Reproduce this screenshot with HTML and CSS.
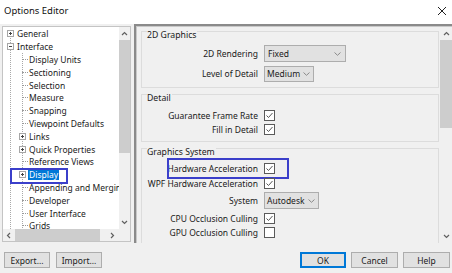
FILE: index.html
```html
<!DOCTYPE html>
<html>
<head>
<meta charset="utf-8">
<link rel="stylesheet" href="styles.css">
</head>
<body>
<div class="dialog">
  <div class="titlebar">
    <span class="title">Options Editor</span>
    <svg class="close" width="10" height="10" viewBox="0 0 10 10"><path d="M1 1L9 9M9 1L1 9" stroke="#222" stroke-width="1"/></svg>
  </div>
  <div class="main">
    <div class="treepanel">
      <div class="tree">
        <div class="row root"><svg class="box" width="7" height="7" viewBox="0 0 7 7"><rect x=".5" y=".5" width="6" height="6" fill="#fff" stroke="#a6a6a6"/><path d="M2 3.5h3M3.5 2v3" stroke="#444"/></svg><span class="label">General</span></div>
        <div class="row root"><svg class="box" width="7" height="7" viewBox="0 0 7 7"><rect x=".5" y=".5" width="6" height="6" fill="#fff" stroke="#a6a6a6"/><path d="M2 3.5h3" stroke="#444"/></svg><span class="label">Interface</span></div>
        <div class="kids">
          <div class="row leaf"><span class="stub"></span><span class="label">Display Units</span></div>
          <div class="row leaf"><span class="stub"></span><span class="label">Sectioning</span></div>
          <div class="row leaf"><span class="stub"></span><span class="label">Selection</span></div>
          <div class="row leaf"><span class="stub"></span><span class="label">Measure</span></div>
          <div class="row leaf"><span class="stub"></span><span class="label">Snapping</span></div>
          <div class="row leaf"><span class="stub"></span><span class="label">Viewpoint Defaults</span></div>
          <div class="row branch"><svg class="box" width="7" height="7" viewBox="0 0 7 7"><rect x=".5" y=".5" width="6" height="6" fill="#fff" stroke="#a6a6a6"/><path d="M2 3.5h3M3.5 2v3" stroke="#444"/></svg><span class="label">Links</span></div>
          <div class="row branch"><svg class="box" width="7" height="7" viewBox="0 0 7 7"><rect x=".5" y=".5" width="6" height="6" fill="#fff" stroke="#a6a6a6"/><path d="M2 3.5h3M3.5 2v3" stroke="#444"/></svg><span class="label">Quick Properties</span></div>
          <div class="row leaf"><span class="stub"></span><span class="label">Reference Views</span></div>
          <div class="row branch marked"><svg class="box" width="7" height="7" viewBox="0 0 7 7"><rect x=".5" y=".5" width="6" height="6" fill="#fff" stroke="#a6a6a6"/><path d="M2 3.5h3M3.5 2v3" stroke="#444"/></svg><span class="label selected">Display</span><span class="hl hl-tree"></span></div>
          <div class="row leaf"><span class="stub"></span><span class="label">Appending and Merging</span></div>
          <div class="row leaf"><span class="stub"></span><span class="label">Developer</span></div>
          <div class="row leaf"><span class="stub"></span><span class="label">User Interface</span></div>
          <div class="row leaf"><span class="stub"></span><span class="label">Grids</span></div>
        </div>
      </div>
      <div class="vscroll">
        <svg class="arrow" width="7" height="5" viewBox="0 0 7 5"><path d="M1 4L3.5 1.5L6 4" stroke="#606060" fill="none" stroke-width="1.2"/></svg>
        <div class="vthumb left-thumb"></div>
        <div class="vfill"></div>
        <svg class="arrow" width="7" height="5" viewBox="0 0 7 5"><path d="M1 1L3.5 3.5L6 1" stroke="#606060" fill="none" stroke-width="1.2"/></svg>
      </div>
      <div class="hscroll">
        <svg class="harrow" width="5" height="7" viewBox="0 0 5 7"><path d="M4 1L1.5 3.5L4 6" stroke="#606060" fill="none" stroke-width="1.2"/></svg>
        <div class="hthumb"></div>
        <div class="hfill"></div>
        <svg class="harrow" width="5" height="7" viewBox="0 0 5 7"><path d="M1 1L3.5 3.5L1 6" stroke="#606060" fill="none" stroke-width="1.2"/></svg>
      </div>
      <div class="corner"></div>
    </div>
    <div class="settings">
      <div class="groups">
        <div class="group g1">
          <div class="gtitle">2D Graphics</div>
          <div class="frow drow first">
            <span class="flabel">2D Rendering</span>
            <span class="combo w-fixed"><span>Fixed</span><svg width="7" height="4" viewBox="0 0 7 4"><path d="M.5 .5L3.5 3.3L6.5 .5" stroke="#8a8a8a" fill="none"/></svg></span>
          </div>
          <div class="frow drow gap3">
            <span class="flabel">Level of Detail</span>
            <span class="combo w-medium"><span>Medium</span><svg width="7" height="4" viewBox="0 0 7 4"><path d="M.5 .5L3.5 3.3L6.5 .5" stroke="#8a8a8a" fill="none"/></svg></span>
          </div>
        </div>
        <div class="group g2">
          <div class="gtitle">Detail</div>
          <div class="frow crow first">
            <span class="flabel">Guarantee Frame Rate</span>
            <svg class="check" width="11" height="11" viewBox="0 0 11 11"><rect x=".5" y=".5" width="10" height="10" fill="#fff" stroke="#5a5a5a"/><path d="M2.5 5.5L4.5 7.5L8.5 3" stroke="#555" fill="none" stroke-width="1"/></svg>
          </div>
          <div class="frow crow">
            <span class="flabel">Fill in Detail</span>
            <svg class="check" width="11" height="11" viewBox="0 0 11 11"><rect x=".5" y=".5" width="10" height="10" fill="#fff" stroke="#5a5a5a"/><path d="M2.5 5.5L4.5 7.5L8.5 3" stroke="#555" fill="none" stroke-width="1"/></svg>
          </div>
        </div>
        <div class="group g3">
          <div class="gtitle">Graphics System</div>
          <div class="frow crow g3first marked">
            <span class="flabel">Hardware Acceleration</span>
            <svg class="check" width="11" height="11" viewBox="0 0 11 11"><rect x=".5" y=".5" width="10" height="10" fill="#fff" stroke="#5a5a5a"/><path d="M2.5 5.5L4.5 7.5L8.5 3" stroke="#555" fill="none" stroke-width="1"/></svg>
            <span class="hl hl-hw"></span>
          </div>
          <div class="frow crow gap1">
            <span class="flabel">WPF Hardware Acceleration</span>
            <svg class="check" width="11" height="11" viewBox="0 0 11 11"><rect x=".5" y=".5" width="10" height="10" fill="#fff" stroke="#5a5a5a"/><path d="M2.5 5.5L4.5 7.5L8.5 3" stroke="#555" fill="none" stroke-width="1"/></svg>
          </div>
          <div class="frow drow gap2">
            <span class="flabel">System</span>
            <span class="combo w-autodesk"><span>Autodesk</span><svg width="7" height="4" viewBox="0 0 7 4"><path d="M.5 .5L3.5 3.3L6.5 .5" stroke="#8a8a8a" fill="none"/></svg></span>
          </div>
          <div class="frow crow gap2">
            <span class="flabel">CPU Occlusion Culling</span>
            <svg class="check" width="11" height="11" viewBox="0 0 11 11"><rect x=".5" y=".5" width="10" height="10" fill="#fff" stroke="#5a5a5a"/><path d="M2.5 5.5L4.5 7.5L8.5 3" stroke="#555" fill="none" stroke-width="1"/></svg>
          </div>
          <div class="frow crow">
            <span class="flabel">GPU Occlusion Culling</span>
            <svg class="check" width="11" height="11" viewBox="0 0 11 11"><rect x=".5" y=".5" width="10" height="10" fill="#fff" stroke="#5a5a5a"/></svg>
          </div>
        </div>
      </div>
      <div class="vscroll rscroll">
        <svg class="arrow" width="7" height="5" viewBox="0 0 7 5"><path d="M1 4L3.5 1.5L6 4" stroke="#606060" fill="none" stroke-width="1.2"/></svg>
        <div class="vthumb right-thumb"></div>
        <div class="vfill"></div>
        <svg class="arrow" width="7" height="5" viewBox="0 0 7 5"><path d="M1 1L3.5 3.5L6 1" stroke="#606060" fill="none" stroke-width="1.2"/></svg>
      </div>
    </div>
  </div>
  <div class="footer">
    <div class="btns">
      <button class="btn">Export...</button>
      <button class="btn">Import...</button>
    </div>
    <div class="btns">
      <button class="btn default">OK</button>
      <button class="btn wide">Cancel</button>
      <button class="btn wide">Help</button>
    </div>
  </div>
</div>
</body>
</html>
```

FILE: styles.css
```css
* { box-sizing: border-box; }
html, body { margin: 0; padding: 0; }
body {
  width: 452px;
  height: 273px;
  overflow: hidden;
  background: #f0f0f0;
  font-family: "Noto Sans", "DejaVu Sans", sans-serif;
  font-size: 8.5px;
  color: #1a1a1a;
}
.dialog { display: flex; flex-direction: column; height: 273px; }

.titlebar {
  height: 24px;
  flex: none;
  background: #fff;
  display: flex;
  align-items: center;
  justify-content: space-between;
  padding: 0 4px 3px 4px;
}
.title { font-size: 9.5px; color: #111; }
.close { margin-right: 1px; }

.main { display: flex; height: 219px; flex: none; }

.treepanel {
  margin: 2px 0 1px 2px;
  width: 129px;
  height: 216px;
  border: 1px solid #c4c4c4;
  background: #fff;
  display: grid;
  grid-template-columns: 1fr 11px;
  grid-template-rows: 1fr 12px;
}
.tree {
  overflow: hidden;
  padding-top: 0.6px;
  white-space: nowrap;
  background-image: repeating-linear-gradient(to bottom, #a9a9a9 0 1px, transparent 1px 2px);
  background-size: 1px 200px;
  background-position: 7px 7px;
  background-repeat: no-repeat;
}
.row {
  height: 12.8px;
  display: flex;
  align-items: center;
  position: relative;
}
.row .box { flex: none; display: block; }
.root .box { margin-left: 4px; }
.root .label { margin-left: 2px; }
.label { padding: 0 1px; line-height: 11px; }
.kids {
  background-image: repeating-linear-gradient(to bottom, #a9a9a9 0 1px, transparent 1px 2px);
  background-size: 1px 100%;
  background-position: 19px 0;
  background-repeat: no-repeat;
}
.stub {
  flex: none;
  width: 6px;
  margin-left: 19px;
  border-top: 1px dotted #9a9a9a;
}
.leaf .label { margin-left: 0; }
.branch .box { margin-left: 16px; }
.branch .label { margin-left: 2px; }
.selected { background: #0078d7; color: #fff; }

.hl {
  position: absolute;
  border: 2px solid #3b3fca;
  pointer-events: none;
}
.hl-tree { left: 7px; top: -0.5px; width: 58px; height: 16px; }
.hl-hw { left: 25px; top: -3px; width: 122px; height: 21px; }

.vscroll {
  background: #f0f0f0;
  display: flex;
  flex-direction: column;
  align-items: center;
}
.vscroll .arrow { flex: none; margin: 4px 0; }
.vthumb { width: 100%; background: #cdcdcd; flex: none; }
.left-thumb { height: 113px; }
.right-thumb { height: 88px; }
.vfill { flex: 1; }
.hscroll {
  background: #f0f0f0;
  display: flex;
  align-items: center;
}
.harrow { flex: none; margin: 0 4px 0 3px; }
.hthumb { height: 100%; width: 85px; background: #cdcdcd; flex: none; }
.hfill { flex: 1; }
.corner { background: #f0f0f0; }

.settings {
  margin-left: 3px;
  width: 318px;
  height: 219px;
  border-top: 2px solid #8a8a8a;
  border-left: 2px solid #8a8a8a;
  box-shadow: inset 1px 1px 0 #c8c8c8;
  display: flex;
  overflow: hidden;
}
.groups {
  flex: 1;
  padding: 5px 1px 0 5px;
  overflow: hidden;
}
.group {
  border: 1px solid #dcdcdc;
  padding-bottom: 5px;
}
.g3 { padding-bottom: 30px; }
.g2, .g3 { margin-top: 6px; }
.gtitle {
  width: fit-content;
  margin: -3px 0 0 5px;
  padding: 0 1px 0 0;
  height: 12px;
  line-height: 12px;
  background: #f0f0f0;
  font-size: 8.7px;
}
.frow {
  display: grid;
  grid-template-columns: 116px auto;
  column-gap: 6px;
  align-items: center;
  position: relative;
  justify-items: start;
}
.flabel { justify-self: end; white-space: nowrap; }
.drow { height: 17px; }
.crow { height: 14px; }
.first { margin-top: 4px; }
.g3first { margin-top: 3px; }
.gap1 { margin-top: 1px; }
.gap2 { margin-top: 2px; }
.gap3 { margin-top: 3px; }
.check { display: block; margin-left: 0; }

.combo {
  height: 17px;
  background: #e1e1e1;
  border: 1px solid #adadad;
  display: flex;
  align-items: center;
  justify-content: space-between;
  padding: 0 4px 0 3px;
}
.w-fixed { width: 82px; }
.w-medium { width: 50px; height: 16px; padding: 0 3px 0 2px; gap: 2px; }
.w-autodesk { width: 55px; padding: 0 3px 0 2px; }

.rscroll { width: 12px; flex: none; margin-top: 1px; }

.footer {
  display: flex;
  justify-content: space-between;
  padding: 9px 2px 0 4px;
}
.btns { display: flex; gap: 5px; }
.btn {
  font-family: inherit;
  font-size: 8.5px;
  height: 16px;
  width: 46px;
  padding: 0;
  background: #e1e1e1;
  border: 1px solid #adadad;
  color: #1a1a1a;
}
.btns:first-child .btn + .btn { margin-left: 1px; }
.wide { width: 47px; }
.default { border: 1px solid #0078d7; box-shadow: inset 0 0 0 1px #0078d7; }
```
